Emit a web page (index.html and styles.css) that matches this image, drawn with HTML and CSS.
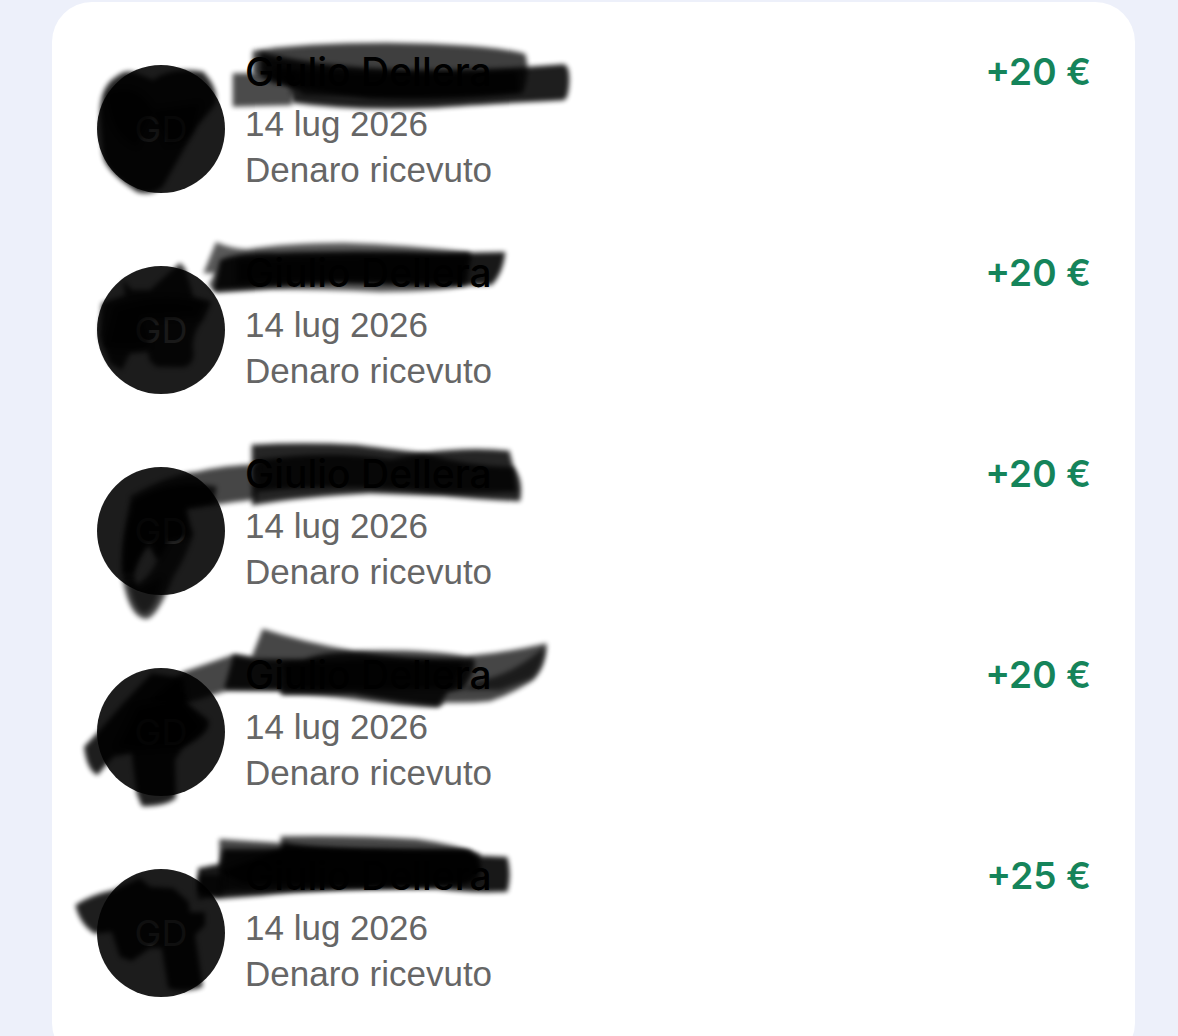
FILE: index.html
```
<!DOCTYPE html>
<html lang="it">
<head>
<meta charset="utf-8">
<meta name="viewport" content="width=device-width, initial-scale=1">
<title>Movimenti</title>
<link rel="stylesheet" href="styles.css">
</head>
<body>
<main class="card">
  <ul class="list">
    <li class="row">
      <span class="avatar">GD</span>
      <div class="details">
        <span class="name">Giulio Dellera</span>
        <span class="meta">14 lug 2026</span>
        <span class="meta">Denaro ricevuto</span>
      </div>
      <span class="amount">+20 €</span>
      <svg class="marker" viewBox="0 0 1560 600" aria-hidden="true">
        <path opacity=".75" d="M548 62Q700 38 950 38Q1270 42 1366 72Q1382 130 1358 190Q1100 215 900 205L610 160L548 130Z"/>
        <path opacity=".7" d="M488 130L680 130L665 226L488 230Z"/>
        <path opacity=".88" d="M570 66Q900 150 1480 103Q1498 105 1498 150Q1496 208 1480 211Q1200 225 1100 233Q850 244 668 218L660 170L570 130Z"/>
        <path opacity=".7" d="M600 110Q900 150 1340 125L1345 185Q1100 205 700 195Z"/>
        <path opacity=".85" d="M138 140Q170 115 200 130L250 150Q300 110 400 125Q450 180 435 225L380 290L278 470Q240 500 200 485Q100 420 98 370L90 250Q90 170 138 140Z"/>
        <path opacity=".6" d="M110 190Q200 150 250 240L390 220L370 300Q350 340 290 345L250 250L200 350Q120 320 110 190Z"/>
      </svg>
    </li>
    <li class="row">
      <span class="avatar">GD</span>
      <div class="details">
        <span class="name">Giulio Dellera</span>
        <span class="meta">14 lug 2026</span>
        <span class="meta">Denaro ricevuto</span>
      </div>
      <span class="amount">+20 €</span>
      <svg class="marker" viewBox="0 3 1560 600" aria-hidden="true">
        <path opacity=".65" d="M438 36Q480 55 530 58Q650 38 820 38Q1020 44 1200 66L1190 168Q1100 185 930 186Q760 178 600 178L440 188L415 165L435 130L400 130Z"/>
        <path opacity=".9" d="M450 90Q500 66 620 68Q900 58 1120 70L1306 66Q1300 130 1265 165L1100 168L800 160L430 182Z"/>
        <path opacity=".65" d="M500 90Q800 76 1205 76L1180 160L800 150L500 160Z"/>
        <path opacity=".8" d="M330 98L345 115L370 200L425 215L400 270Q370 300 368 350Q380 400 340 412L260 410Q230 390 235 365L180 370L155 420L120 400L90 320L95 220L165 195L160 150L185 180L240 180Z"/>
        <path opacity=".6" d="M130 230Q280 180 400 220L380 260L220 270L240 350Q160 365 100 350Z"/>
      </svg>
    </li>
    <li class="row">
      <span class="avatar">GD</span>
      <div class="details">
        <span class="name">Giulio Dellera</span>
        <span class="meta">14 lug 2026</span>
        <span class="meta">Denaro ricevuto</span>
      </div>
      <span class="amount">+20 €</span>
      <svg class="marker" viewBox="0 6 1560 600" aria-hidden="true">
        <path opacity=".72" d="M180 200Q300 130 380 125Q460 106 570 102L560 208Q420 225 340 240L370 310Q350 380 310 440Q260 570 225 567Q180 560 160 460Q145 330 190 240ZM250 340Q170 390 200 465Q240 440 262 390Z" fill-rule="evenodd"/>
        <path opacity=".6" d="M175 450L210 475L275 440Q265 530 225 550Q190 545 175 450Z"/>
        <path opacity=".85" d="M545 44Q700 36 860 44Q1000 62 1060 68Q1200 50 1318 62L1330 110Q1362 150 1350 214Q1220 208 1120 198L900 190Q700 200 546 226Z"/>
        <path opacity=".8" d="M560 90Q780 60 960 88L1060 70Q1200 110 1330 112L1340 185Q1180 190 1080 185Q800 160 560 185Z"/>
        <path opacity=".8" d="M180 220Q300 140 440 170L430 220L350 230L360 320L300 330L265 390L230 340L190 430L160 430Q160 300 180 220Z"/>
      </svg>
    </li>
    <li class="row">
      <span class="avatar">GD</span>
      <div class="details">
        <span class="name">Giulio Dellera</span>
        <span class="meta">14 lug 2026</span>
        <span class="meta">Denaro ricevuto</span>
      </div>
      <span class="amount">+20 €</span>
      <svg class="marker" viewBox="0 39 1560 600" aria-hidden="true">
        <path opacity=".72" d="M578 26Q700 66 850 92Q1060 86 1190 108Q1310 98 1430 70Q1430 140 1390 180Q1330 220 1260 244Q1200 250 1125 248L1105 262Q1000 260 850 238Q740 222 634 224L630 212L470 212L350 250L240 240L340 155L495 102L545 110Z"/>
        <path opacity=".85" d="M490 106L545 116L700 118Q780 90 880 98Q1040 120 1210 116Q1220 130 1205 165L1180 208L1135 216L1105 258Q1000 250 850 222L640 222L630 210L462 208Z"/>
        <path opacity=".75" d="M640 130Q900 110 1180 130L1150 205Q900 210 650 205Z"/>
        <path opacity=".6" d="M1215 185Q1320 170 1425 80Q1420 140 1385 175L1290 210L1180 210Z"/>
        <path opacity=".88" d="M245 160L340 175L350 250L415 300Q425 340 340 380L315 420L318 535Q280 562 215 558L200 520L185 400L130 410L82 466Q50 450 42 380L90 330L160 250Z"/>
        <path opacity=".7" d="M200 260L330 230L400 320L340 380L200 390L140 380Z"/>
      </svg>
    </li>
    <li class="row">
      <span class="avatar">GD</span>
      <div class="details">
        <span class="name">Giulio Dellera</span>
        <span class="meta">14 lug 2026</span>
        <span class="meta">Denaro ricevuto</span>
      </div>
      <span class="amount">+25 €</span>
      <svg class="marker" viewBox="0 27 1560 600" aria-hidden="true">
        <path opacity=".72" d="M448 42L632 54L632 34Q850 30 1040 42Q1160 58 1230 88L1225 170L1040 188L450 200Z"/>
        <path opacity=".9" d="M384 130L450 116L460 72L632 72L640 50Q700 74 1180 76L1230 92L1312 96Q1326 150 1312 200Q1200 205 1100 192Q800 188 570 212L440 222L384 200Z"/>
        <path opacity=".8" d="M450 140L640 70L1200 76L1235 130L1190 176L900 180L520 175Z"/>
        <path opacity=".88" d="M16 240Q60 210 130 195L210 160L240 185L310 190L355 230L360 262L405 262L405 300L375 330L398 485Q340 505 295 490L275 370L240 370L185 408L150 395L125 320L75 326Q30 300 16 240Z"/>
        <path opacity=".75" d="M384 150L460 150L460 205L384 225Z"/>
      </svg>
    </li>
  </ul>
</main>
</body>
</html>
```
FILE: styles.css
```
* {
  box-sizing: border-box;
}

body {
  margin: 0;
  background: #edf0fa;
  font-family: Inter, "Liberation Sans", sans-serif;
  overflow-x: hidden;
}

.card {
  margin: 2px 43px 0 52px;
  padding: 41px 44px 66px 45px;
  border-radius: 40px;
  background: #fff;
}

.list {
  display: flex;
  flex-direction: column;
  gap: 51px;
  margin: 0;
  padding: 0;
  list-style: none;
}

.row {
  position: relative;
  display: flex;
  align-items: flex-end;
  gap: 20px;
}

.avatar {
  display: flex;
  flex: none;
  align-items: center;
  justify-content: center;
  width: 128px;
  height: 128px;
  border-radius: 50%;
  background: #1c1c1c;
  color: #808080;
  font-size: 36px;
}

.details {
  display: flex;
  flex: 1;
  flex-direction: column;
}

.name {
  color: #000;
  font-size: 39px;
  font-weight: 500;
  line-height: 58px;
}

.meta {
  color: #666;
  font-family: "Liberation Sans", Arial, sans-serif;
  font-size: 35px;
  line-height: 46px;
}

.amount {
  align-self: flex-start;
  color: #15845a;
  font-size: 37px;
  font-weight: 600;
  line-height: 58px;
  white-space: nowrap;
}

/* Marker strokes over the sender */
.marker {
  position: absolute;
  top: -13px;
  left: -27px;
  width: 520px;
  height: 200px;
  overflow: visible;
  pointer-events: none;
}

.marker path {
  filter: blur(8px);
}
```
